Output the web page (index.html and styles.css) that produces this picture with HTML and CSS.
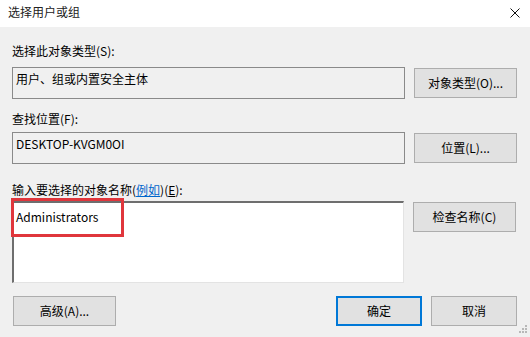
FILE: index.html
```html
<!DOCTYPE html>
<html lang="zh-CN">
<head>
<meta charset="utf-8">
<title>选择用户或组</title>
<link rel="stylesheet" href="styles.css">
</head>
<body>
<div class="dialog">
  <div class="titlebar">
    <span class="title">选择用户或组</span>
    <svg class="close" width="10" height="10" viewBox="0 0 10 10"><path d="M0.5 0.5 L9.5 9.5 M9.5 0.5 L0.5 9.5" stroke="#111" stroke-width="1" fill="none"/></svg>
  </div>
  <div class="content">
    <div class="label l1">选择此对象类型(S):</div>
    <div class="row r1">
      <div class="field readonly">用户、组或内置安全主体</div>
      <button class="btn">对象类型(O)...</button>
    </div>
    <div class="label l2">查找位置(F):</div>
    <div class="row r2">
      <div class="field readonly">DESKTOP-KVGM0OI</div>
      <button class="btn">位置(L)...</button>
    </div>
    <div class="label l3">输入要选择的对象名称(<a class="link">例如</a>)(<u>E</u>):</div>
    <div class="row r3">
      <div class="area-wrap">
        <div class="area">Administrators</div>
        <div class="highlight"></div>
      </div>
      <button class="btn">检查名称(C)</button>
    </div>
    <div class="footer">
      <button class="btn">高级(A)...</button>
      <div class="right">
        <button class="btn small primary">确定</button>
        <button class="btn small">取消</button>
      </div>
    </div>
  </div>
  <svg class="grip" width="10" height="10" viewBox="0 0 10 10">
    <g fill="#b8b8b8">
      <rect x="7" y="1" width="2" height="2"/>
      <rect x="4" y="4" width="2" height="2"/><rect x="7" y="4" width="2" height="2"/>
      <rect x="1" y="7" width="2" height="2"/><rect x="4" y="7" width="2" height="2"/><rect x="7" y="7" width="2" height="2"/>
    </g>
  </svg>
</div>
</body>
</html>
```

FILE: styles.css
```css
* { box-sizing: border-box; }
html, body { margin: 0; padding: 0; }
body {
  width: 530px;
  height: 337px;
  overflow: hidden;
  background: #f0f0f0;
  font-family: "Noto Sans CJK SC", "Noto Sans", sans-serif;
  font-size: 12px;
  color: #000;
}
.dialog { position: relative; width: 530px; height: 337px; }
.titlebar {
  height: 27px;
  background: #fff;
  display: flex;
  align-items: center;
  justify-content: space-between;
  padding: 0 10px 3px 8px;
}
.title { font-size: 12px; color: #222; line-height: 16px; }
.close { display: block; margin-top: 2px; }
.content {
  padding: 0 13px 0 12px;
  display: flex;
  flex-direction: column;
}
.label { line-height: 16px; height: 16px; }
.l1 { margin-top: 16px; }
.l2 { margin-top: 12px; }
.l3 { margin-top: 18px; }
.link { color: #0066cc; text-decoration: underline; }
.row { display: flex; gap: 9px; align-items: flex-start; }
.r1 { margin-top: 8px; }
.r2 { margin-top: 5px; }
.r3 { margin-top: 3px; }
.field {
  width: 393px;
  height: 32px;
  border: 1px solid #8a8a8a;
  padding: 3px 3px;
  line-height: 16px;
  white-space: nowrap;
}
.readonly { background: #f0f0f0; }
.btn {
  width: 103px;
  height: 30px;
  background: #e1e1e1;
  border: 1px solid #adadad;
  font-family: inherit;
  font-size: 12px;
  color: #000;
  padding: 0;
  line-height: 16px;
  margin: 0;
}
.r1 .btn { margin-top: 1px; }
.r2 .btn { margin-top: 1px; }
.r3 .btn { margin-top: 1px; }
.area-wrap { position: relative; width: 392px; height: 82px; }
.area {
  width: 100%;
  height: 100%;
  background: #fff;
  border-top: 2px solid #6e6e6e;
  border-left: 2px solid #6e6e6e;
  border-right: 1px solid #e3e3e3;
  border-bottom: 1px solid #e3e3e3;
  padding: 6px 2px;
  line-height: 16px;
}
.highlight {
  position: absolute;
  left: -1px;
  top: -3px;
  width: 113px;
  height: 39px;
  border: 3px solid #e0363c;
}
.footer {
  margin-top: 13px;
  display: flex;
  justify-content: space-between;
  padding-left: 1px;
}
.footer .right { display: flex; gap: 9px; }
.btn.small { width: 86px; }
.btn.primary { border: 2px solid #0078d7; }
.grip { position: absolute; right: 2px; bottom: 3px; }
```
